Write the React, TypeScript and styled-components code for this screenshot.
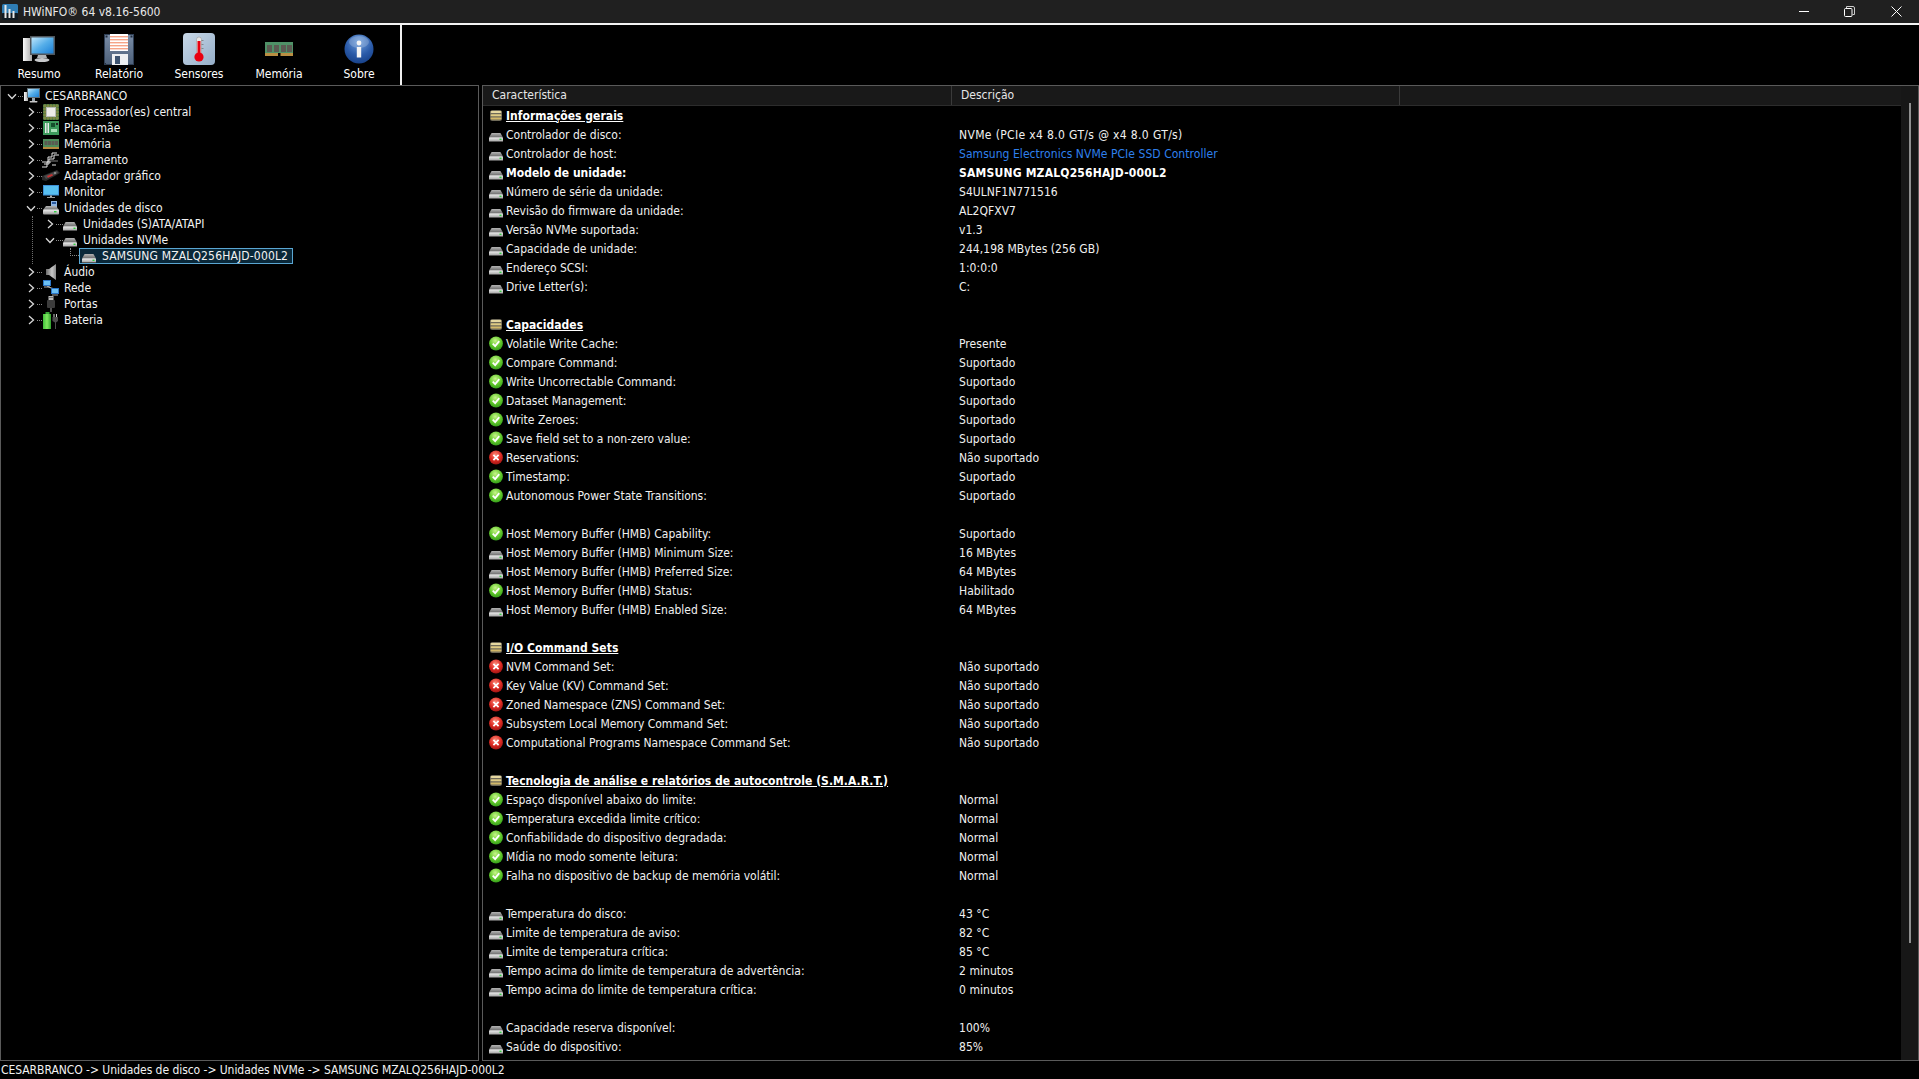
import React from "react";
import styled, { createGlobalStyle } from "styled-components";

const Global = createGlobalStyle`
  html, body { margin: 0; padding: 0; background: #000; overflow: hidden; }
  #root { width: 1919px; height: 1079px; }
  * { box-sizing: border-box; }
`;

const FONT = `"DejaVu Sans Condensed", "DejaVu Sans", "Noto Sans", sans-serif`;

const Win = styled.div`
  width: 1919px; height: 1079px; background: #000; color: #f2f2f2;
  font-family: ${FONT}; font-size: 12px;
  display: grid; grid-template-rows: 23px 2px 60px 976px 18px;
`;
const TitleBar = styled.header`
  background: #202020; display: flex; align-items: center; padding-left: 2px; font-size: 12px; color: #e8e8e8;
`;
const TitleText = styled.span` flex: 1; margin-left: 5px; `;
const WinBtn = styled.button`
  width: 46px; height: 23px; padding: 0; border: 0; background: none; color: #fff;
  display: flex; align-items: center; justify-content: center;
`;
const TitleRule = styled.div` background: #f4f4f4; `;
const Toolbar = styled.nav` display: flex; `;
const Tools = styled.div`
  width: 403px; height: 60px; margin-left: -1px; display: flex; border-right: 2px solid #f0f0f0;
`;
const Tool = styled.div`
  width: 80px; height: 60px; display: flex; flex-direction: column; align-items: center;
  color: #fff; font-size: 12px; line-height: 14px;
`;
const ToolIconBox = styled.div`
  height: 40px; margin-bottom: 2px; padding-top: 8px; display: flex; align-items: center;
`;
const Main = styled.main` display: flex; gap: 3px; min-height: 0; `;
const TreePanel = styled.section`
  width: 479px; border: 1px solid #5a5a5a; padding-top: 2px; overflow: hidden;
`;
const TreeRow = styled.div<{ $pad: number }>`
  height: 16px; display: flex; align-items: center; padding-left: ${p => p.$pad}px; white-space: nowrap; color: #f2f2f2;
`;
const Chevron = styled.span`
  width: 12px; height: 16px; display: flex; align-items: center; justify-content: center; flex: none;
`;
const Dots = styled.span<{ $w: number }>`
  width: ${p => p.$w}px; border-top: 1px dotted #8a8a8a; flex: none;
`;
const Elbow = styled.span`
  width: 9px; height: 8px; flex: none; align-self: flex-start;
  border-left: 1px dotted #8a8a8a; border-bottom: 1px dotted #8a8a8a;
`;
const TreeIconBox = styled.span<{ $w: number; $start?: boolean }>`
  width: ${p => p.$w}px; height: 16px; display: flex; align-items: center;
  justify-content: ${p => (p.$start ? "flex-start" : "center")}; flex: none;
`;
const TreeLabel = styled.span` margin-left: 4px; `;
const Selected = styled.span`
  display: flex; align-items: center; height: 16px; padding: 0 4px 0 2px; letter-spacing: 0.16px;
  border: 1px solid #5aa6d2; background: #0a2839;
`;
const Branch = styled.div`
  margin-left: 31px; border-left: 1px dotted #6e6e6e;
`;
const DetailPanel = styled.section`
  flex: 1; min-width: 0; border: 1px solid #5a5a5a; display: flex; overflow: hidden;
`;
const DetailBody = styled.div` flex: 1; min-width: 0; `;
const Head = styled.div`
  height: 20px; background: #191919; display: grid; grid-template-columns: 469px 448px 1fr; align-items: stretch;
  border-bottom: 1px solid #2c2c2c; color: #e6e6e6;
`;
const HeadCell = styled.div`
  padding: 0 0 2px 9px; display: flex; align-items: center; border-right: 1px solid #3a3a3a;
  &:last-child { border-right: 0; }
`;
const Row = styled.div`
  height: 19px; display: grid; grid-template-columns: 469px 1fr; align-items: center;
`;
const Feature = styled.div<{ $strong?: boolean; $head?: boolean }>`
  display: flex; align-items: center; padding-left: 6px; gap: 3px; white-space: nowrap;
  font-weight: ${p => (p.$strong || p.$head ? 700 : 400)};
  letter-spacing: ${p => (p.$head ? "0.03px" : "0")};
  color: ${p => (p.$strong || p.$head ? "#fff" : "#f0f0f0")};
`;
const FeatureText = styled.span<{ $head?: boolean }>`
  text-decoration: ${p => (p.$head ? "underline" : "none")};
`;
const Value = styled.div<{ $strong?: boolean; $link?: boolean; $wide?: boolean }>`
  padding-left: 7px; white-space: nowrap;
  font-weight: ${p => (p.$strong ? 700 : 400)};
  letter-spacing: ${p => (p.$wide ? "0.36px" : p.$strong ? "0.2px" : "0.05px")};
  color: ${p => (p.$link ? "#2f80ed" : p.$strong ? "#fff" : "#f0f0f0")};
`;
const RowIconBox = styled.span`
  width: 14px; height: 19px; flex: none; display: flex; align-items: center; justify-content: center;
`;
const Scrollbar = styled.div`
  width: 17px; background: #171717; flex: none; padding: 17px 0 117px 8px;
`;
const Thumb = styled.div` width: 2px; height: 100%; background: #8f8f8f; `;
const Status = styled.footer`
  padding-left: 1px; display: flex; align-items: center; color: #f2f2f2; white-space: nowrap; font-size: 12px;
  letter-spacing: -0.05px;
`;
const Sprite = styled.svg` width: 0; height: 0; position: absolute; `;

/* ---------- drawings ---------- */
const Gradients = () => (
  <Sprite aria-hidden="true">
    <defs>
      <linearGradient id="hddTop" x1="0" y1="0" x2="0" y2="1"><stop offset="0" stopColor="#b4b4b4" /><stop offset="1" stopColor="#6a6a6a" /></linearGradient>
      <linearGradient id="hddBot" x1="0" y1="0" x2="0" y2="1"><stop offset="0" stopColor="#f2f2f2" /><stop offset="1" stopColor="#9a9a9a" /></linearGradient>
      <radialGradient id="okG" cx=".45" cy=".3" r=".75"><stop offset="0" stopColor="#c8f58a" /><stop offset=".55" stopColor="#63c92c" /><stop offset="1" stopColor="#2f9a18" /></radialGradient>
      <radialGradient id="noG" cx=".45" cy=".3" r=".75"><stop offset="0" stopColor="#fb8a78" /><stop offset=".55" stopColor="#dc2a22" /><stop offset="1" stopColor="#991212" /></radialGradient>
      <linearGradient id="screen" x1="0" y1="0" x2="1" y2="1"><stop offset="0" stopColor="#bfe6fb" /><stop offset=".5" stopColor="#55aee9" /><stop offset="1" stopColor="#1b7fd6" /></linearGradient>
      <linearGradient id="tower" x1="0" y1="0" x2="1" y2="0"><stop offset="0" stopColor="#fafafa" /><stop offset="1" stopColor="#a8a8a8" /></linearGradient>
      <linearGradient id="floppy" x1="0" y1="0" x2="0" y2="1"><stop offset="0" stopColor="#7b8ea8" /><stop offset="1" stopColor="#4d6079" /></linearGradient>
      <linearGradient id="tile" x1="0" y1="0" x2="1" y2="1"><stop offset="0" stopColor="#c8d8e8" /><stop offset="1" stopColor="#95aec8" /></linearGradient>
      <radialGradient id="orb" cx=".5" cy=".25" r=".85"><stop offset="0" stopColor="#6f9fdc" /><stop offset=".55" stopColor="#2a5aa8" /><stop offset="1" stopColor="#123a80" /></radialGradient>
      <linearGradient id="batt" x1="0" y1="0" x2="1" y2="0"><stop offset="0" stopColor="#3fbf3a" /><stop offset=".5" stopColor="#7fe85f" /><stop offset="1" stopColor="#2fa02c" /></linearGradient>
      <linearGradient id="spk" x1="0" y1="0" x2="1" y2="0"><stop offset="0" stopColor="#6a6a6a" /><stop offset=".6" stopColor="#c8c8c8" /><stop offset="1" stopColor="#8a8a8a" /></linearGradient>
    </defs>
  </Sprite>
);

const Hdd = () => (
  <svg width="14" height="9" viewBox="0 0 14 9" style={{ marginTop: 5 }}>
    <path d="M2.6 0H11.4L14 4.5H0Z" fill="url(#hddTop)" />
    <rect x="0" y="4.2" width="14" height="4.8" rx="1" fill="url(#hddBot)" />
    <rect x="0" y="8" width="14" height="1" fill="#555" />
    <rect x="10.5" y="5.6" width="2" height="1.4" fill="#30d040" />
  </svg>
);
const Ok = () => (
  <svg width="15" height="15" viewBox="0 0 15 15">
    <circle cx="7.5" cy="7.5" r="7.4" fill="url(#okG)" />
    <path d="M4 7.6 6.6 10.3 11 5" fill="none" stroke="#fff" strokeWidth="1.9" />
  </svg>
);
const No = () => (
  <svg width="15" height="15" viewBox="0 0 15 15">
    <circle cx="7.5" cy="7.5" r="7.4" fill="url(#noG)" />
    <path d="M4.7 4.7 10.3 10.3M10.3 4.7 4.7 10.3" fill="none" stroke="#fff" strokeWidth="1.9" />
  </svg>
);
const Stack = () => (
  <svg width="12" height="11" viewBox="0 0 12 11" style={{ marginTop: -1 }}>
    <rect x="0" y="0" width="12" height="11" rx="2.5" fill="#6f6a58" />
    <rect x="0.7" y="1" width="10.6" height="2" rx=".8" fill="#e6d8a0" />
    <rect x="0.7" y="4.3" width="10.6" height="2" rx=".8" fill="#e0cc84" />
    <rect x="0.7" y="7.6" width="10.6" height="2" rx=".8" fill="#d2b868" />
  </svg>
);

const ChevronRight = () => (
  <svg width="7" height="10" viewBox="0 0 7 10"><path d="M1 1 5.5 5 1 9" fill="none" stroke="#d8d8d8" strokeWidth="1.3" /></svg>
);
const ChevronDown = () => (
  <svg width="10" height="7" viewBox="0 0 10 7"><path d="M1 1.2 5 5.5 9 1.2" fill="none" stroke="#d8d8d8" strokeWidth="1.3" /></svg>
);

const PcSmall = () => (
  <svg width="16" height="16" viewBox="0 0 16 16">
    <rect x="0" y="4" width="4" height="9" fill="url(#tower)" />
    <rect x="3" y="0" width="13" height="10" fill="#5d6a72" />
    <rect x="4" y="1" width="11" height="8" fill="url(#screen)" />
    <rect x="8" y="10" width="3" height="3" fill="#9aa5ac" />
    <rect x="5.5" y="13" width="8" height="1.5" rx=".7" fill="#c8c8c8" />
  </svg>
);
const Cpu = () => (
  <svg width="16" height="16" viewBox="0 0 16 16">
    <rect x="0" y="0" width="16" height="16" rx="1" fill="#3e6f3e" />
    <path d="M2 0V16M5 0V16M8 0V16M11 0V16M14 0V16M0 2H16M0 5H16M0 8H16M0 11H16M0 14H16" stroke="#b8a24c" strokeWidth=".6" />
    <rect x="3" y="3" width="10" height="10" fill="#b8bcb8" />
    <rect x="4" y="4" width="8" height="8" fill="#ecece8" />
  </svg>
);
const Board = () => (
  <svg width="16" height="14" viewBox="0 0 16 14">
    <rect width="16" height="14" fill="#3c9a5c" />
    <rect x="2" y="2" width="1.5" height="10" fill="#e8e8e8" />
    <rect x="4.5" y="2" width="1.5" height="10" fill="#e8e8e8" />
    <rect x="8" y="2" width="4" height="4" fill="#14502c" />
    <rect x="8" y="8" width="6" height="3" fill="#a8e0b8" />
    <rect x="13" y="2" width="2" height="2" fill="#222" />
  </svg>
);
const RamSmall = () => (
  <svg width="16" height="11" viewBox="0 0 16 11">
    <rect width="16" height="9" fill="#4d8a5a" />
    <rect x="1.5" y="2" width="3" height="4" fill="#5a5a52" />
    <rect x="5" y="2" width="3" height="4" fill="#5a5a52" />
    <rect x="8.5" y="2" width="3" height="4" fill="#5a5a52" />
    <rect x="12" y="2" width="3" height="4" fill="#5a5a52" />
    <rect x="0" y="8" width="16" height="2" fill="#b5893f" />
  </svg>
);
const Bus = () => (
  <svg width="18" height="16" viewBox="0 0 18 16">
    <path d="M0 10H6V5H10V1H15M2 12H7V7H12V3H17M0 15H5V10H9M10 13H14" fill="none" stroke="#e4e4e4" strokeWidth="1" />
    <path d="M8 9H16" stroke="#808080" strokeWidth="1" />
  </svg>
);
const Gpu = () => (
  <svg width="18" height="12" viewBox="0 0 18 12">
    <path d="M0 6 15 0 18 3 4 11 0 10Z" fill="#2a2a2a" />
    <path d="M2 6 15 1 16 3 4 9Z" fill="#4a4a4a" />
    <path d="M5 6 10 4 11 5.5 6 7.8Z" fill="#c83030" />
    <circle cx="13" cy="3" r="1.2" fill="#888" />
  </svg>
);
const MonitorSmall = () => (
  <svg width="16" height="14" viewBox="0 0 16 14">
    <rect width="16" height="10.5" fill="#3e8fd6" />
    <rect x="1" y="1" width="14" height="8.5" fill="#58bff0" />
    <rect x="7" y="10.5" width="2" height="1.5" fill="#aaa" />
    <rect x="4" y="12" width="8" height="1" fill="#999" />
  </svg>
);
const Drives = () => (
  <svg width="16" height="14" viewBox="0 0 16 14">
    <rect x="8" y="0" width="6" height="7" fill="#8fb4e0" />
    <rect x="9" y="1" width="4" height="2" fill="#2a5aa0" />
    <path d="M3 5H13L16 9H0Z" fill="url(#hddTop)" />
    <rect x="0" y="8.5" width="16" height="5" rx="1" fill="url(#hddBot)" />
    <rect x="11" y="10" width="2.5" height="1.4" fill="#30d040" />
  </svg>
);
const Speaker = () => (
  <svg width="10" height="16" viewBox="0 0 10 16">
    <path d="M0 5H3L10 0V16L3 11H0Z" fill="url(#spk)" />
  </svg>
);
const Net = () => (
  <svg width="16" height="16" viewBox="0 0 16 16">
    <path d="M4 6 8 8 12 9" stroke="#d0d0d0" strokeWidth="1" fill="none" />
    <rect x="0" y="0" width="8" height="6" fill="#2c76c8" />
    <rect x="1" y="1" width="6" height="4" fill="#6cc0f4" />
    <rect x="8" y="8" width="8" height="6" fill="#2c76c8" />
    <rect x="9" y="9" width="6" height="4" fill="#6cc0f4" />
    <rect x="1" y="6.5" width="6" height="1" fill="#aaa" />
    <rect x="9" y="14.5" width="6" height="1" fill="#aaa" />
  </svg>
);
const Usb = () => (
  <svg width="8" height="16" viewBox="0 0 8 16">
    <rect x="1.5" y="0" width="5" height="4" fill="#b8b8b8" />
    <rect x="0" y="4" width="8" height="8" rx="1" fill="#3c3c3c" />
    <rect x="2.5" y="1" width="1" height="1" fill="#333" />
    <rect x="4.5" y="1" width="1" height="1" fill="#333" />
    <rect x="3" y="12" width="2" height="4" fill="#505050" />
  </svg>
);
const Battery = () => (
  <svg width="16" height="17" viewBox="0 0 16 17">
    <rect x="2.5" y="0" width="4" height="2" fill="#3aa838" />
    <rect x="0" y="2" width="8" height="15" fill="url(#batt)" />
    <rect x="10.5" y="2" width="1" height="3" fill="#cfcfcf" />
    <rect x="13" y="2" width="1" height="3" fill="#cfcfcf" />
    <path d="M9.5 5H15V9L13 10.5V17H12V10.5L9.5 9Z" fill="#4c4c4c" />
  </svg>
);

const BigMonitor = () => (
  <svg width="32" height="26" viewBox="0 0 32 26">
    <rect x="0" y="2" width="9" height="23" fill="url(#tower)" />
    <rect x="7" y="0" width="25" height="19" fill="#50565c" />
    <path d="M8.5 1.5H30.5V17.5H8.5Z" fill="url(#screen)" />
    <path d="M15 19H23L24 22H14Z" fill="#b0b4b8" />
    <ellipse cx="19" cy="24" rx="7.5" ry="2" fill="#c8cacc" />
  </svg>
);
const BigFloppy = () => (
  <svg width="30" height="31" viewBox="0 0 30 31">
    <path d="M0 0H30V31H3L0 28Z" fill="url(#floppy)" />
    <rect x="0.5" y="0.5" width="29" height="30" fill="none" stroke="#2f3f55" />
    <rect x="6" y="0" width="18" height="17" fill="#fff" />
    {[2, 5, 8, 11, 14].map(y => <rect key={y} x="6" y={y} width="18" height="1.4" fill="#f6a488" />)}
    <rect x="8" y="20" width="16" height="11" fill="#eef0f2" />
    <rect x="11" y="22" width="5" height="8" fill="#3e5470" />
    <rect x="1.5" y="1.5" width="2" height="2" fill="#1f2b3c" />
    <rect x="26.5" y="1.5" width="2" height="2" fill="#1f2b3c" />
  </svg>
);
const BigThermo = () => (
  <svg width="32" height="32" viewBox="0 0 32 32">
    <rect width="32" height="32" rx="4" fill="url(#tile)" />
    <rect x="13.5" y="4" width="5" height="20" rx="2.5" fill="#e8e8e8" stroke="#9a9a9a" strokeWidth=".6" />
    <rect x="14.5" y="8" width="3" height="16" fill="#e80010" />
    <circle cx="16" cy="24" r="4.6" fill="#e80010" />
    <rect x="18.5" y="7" width="2" height=".8" fill="#777" />
    <rect x="18.5" y="11" width="2" height=".8" fill="#777" />
    <rect x="18.5" y="15" width="2" height=".8" fill="#777" />
  </svg>
);
const BigRam = () => (
  <svg width="28" height="15" viewBox="0 0 28 15">
    <rect width="28" height="13" fill="#4f9167" />
    {[2, 9, 16, 22].map(x => <rect key={x} x={x} y="3" width="5" height="7" fill="#5c5a52" />)}
    <rect x="0" y="11" width="28" height="3" fill="#b98e42" />
    <rect x="13" y="11" width="2.5" height="4" fill="#000" />
  </svg>
);
const BigInfo = () => (
  <svg width="30" height="30" viewBox="0 0 30 30">
    <circle cx="15" cy="15" r="14.5" fill="url(#orb)" />
    <ellipse cx="15" cy="8" rx="10" ry="6" fill="#fff" opacity=".2" />
    <circle cx="15" cy="9" r="2.4" fill="#f4f4f4" />
    <rect x="12.8" y="13" width="4.4" height="10.5" fill="#f4f4f4" />
  </svg>
);
const AppLogo = () => (
  <svg width="16" height="16" viewBox="0 0 16 16">
    <rect width="16" height="10" rx="1.5" fill="#2f7db4" />
    <rect y="9" width="16" height="7" rx="1" fill="#101a22" />
    <rect x="2.5" y="1" width="2" height="13" fill="#e8e8e8" />
    <rect x="6.5" y="5" width="2" height="9" fill="#e8e8e8" />
    <rect x="10.5" y="7" width="2" height="7" fill="#e8e8e8" />
  </svg>
);

/* ---------- data ---------- */
const tools = [
  { label: "Resumo", icon: <BigMonitor /> },
  { label: "Relatório", icon: <BigFloppy /> },
  { label: "Sensores", icon: <BigThermo /> },
  { label: "Memória", icon: <BigRam /> },
  { label: "Sobre", icon: <BigInfo /> },
];
const level1a = [
  { label: "Processador(es) central", icon: <Cpu /> },
  { label: "Placa-mãe", icon: <Board /> },
  { label: "Memória", icon: <RamSmall /> },
  { label: "Barramento", icon: <Bus /> },
  { label: "Adaptador gráfico", icon: <Gpu /> },
  { label: "Monitor", icon: <MonitorSmall /> },
];
const level1b = [
  { label: "Áudio", icon: <Speaker /> },
  { label: "Rede", icon: <Net /> },
  { label: "Portas", icon: <Usb /> },
  { label: "Bateria", icon: <Battery /> },
];

type Kind = "hdd" | "ok" | "no" | "stack";
type R = { k?: Kind; a?: string; b?: string; head?: boolean; strong?: boolean; link?: boolean; wide?: boolean };
const hdd = (a: string, b: string, extra: Partial<R> = {}): R => ({ k: "hdd", a, b, ...extra });
const ok = (a: string, b: string): R => ({ k: "ok", a, b });
const no = (a: string, b = "Não suportado"): R => ({ k: "no", a, b });
const sec = (a: string): R => ({ k: "stack", a, head: true });
const rows: R[] = [
  sec("Informações gerais"),
  hdd("Controlador de disco:", "NVMe (PCIe x4 8.0 GT/s @ x4 8.0 GT/s)", { wide: true }),
  hdd("Controlador de host:", "Samsung Electronics NVMe PCIe SSD Controller", { link: true }),
  hdd("Modelo de unidade:", "SAMSUNG MZALQ256HAJD-000L2", { strong: true }),
  hdd("Número de série da unidade:", "S4ULNF1N771516"),
  hdd("Revisão do firmware da unidade:", "AL2QFXV7"),
  hdd("Versão NVMe suportada:", "v1.3"),
  hdd("Capacidade de unidade:", "244,198 MBytes (256 GB)"),
  hdd("Endereço SCSI:", "1:0:0:0"),
  hdd("Drive Letter(s):", "C:"),
  {},
  sec("Capacidades"),
  ok("Volatile Write Cache:", "Presente"),
  ok("Compare Command:", "Suportado"),
  ok("Write Uncorrectable Command:", "Suportado"),
  ok("Dataset Management:", "Suportado"),
  ok("Write Zeroes:", "Suportado"),
  ok("Save field set to a non-zero value:", "Suportado"),
  no("Reservations:"),
  ok("Timestamp:", "Suportado"),
  ok("Autonomous Power State Transitions:", "Suportado"),
  {},
  ok("Host Memory Buffer (HMB) Capability:", "Suportado"),
  hdd("Host Memory Buffer (HMB) Minimum Size:", "16 MBytes"),
  hdd("Host Memory Buffer (HMB) Preferred Size:", "64 MBytes"),
  ok("Host Memory Buffer (HMB) Status:", "Habilitado"),
  hdd("Host Memory Buffer (HMB) Enabled Size:", "64 MBytes"),
  {},
  sec("I/O Command Sets"),
  no("NVM Command Set:"),
  no("Key Value (KV) Command Set:"),
  no("Zoned Namespace (ZNS) Command Set:"),
  no("Subsystem Local Memory Command Set:"),
  no("Computational Programs Namespace Command Set:"),
  {},
  sec("Tecnologia de análise e relatórios de autocontrole (S.M.A.R.T.)"),
  ok("Espaço disponível abaixo do limite:", "Normal"),
  ok("Temperatura excedida limite crítico:", "Normal"),
  ok("Confiabilidade do dispositivo degradada:", "Normal"),
  ok("Mídia no modo somente leitura:", "Normal"),
  ok("Falha no dispositivo de backup de memória volátil:", "Normal"),
  {},
  hdd("Temperatura do disco:", "43 °C"),
  hdd("Limite de temperatura de aviso:", "82 °C"),
  hdd("Limite de temperatura crítica:", "85 °C"),
  hdd("Tempo acima do limite de temperatura de advertência:", "2 minutos"),
  hdd("Tempo acima do limite de temperatura crítica:", "0 minutos"),
  {},
  hdd("Capacidade reserva disponível:", "100%"),
  hdd("Saúde do dispositivo:", "85%"),
];
const kindIcon = (k?: Kind) =>
  k === "hdd" ? <Hdd /> : k === "ok" ? <Ok /> : k === "no" ? <No /> : k === "stack" ? <Stack /> : null;

const Level1 = ({ label, icon, open }: { label: string; icon: React.ReactNode; open?: boolean }) => (
  <TreeRow $pad={24}>
    <Chevron>{open ? <ChevronDown /> : <ChevronRight />}</Chevron>
    <Dots $w={5} />
    <TreeIconBox $w={18}>{icon}</TreeIconBox>
    <TreeLabel>{label}</TreeLabel>
  </TreeRow>
);

export default function App() {
  return (
    <Win>
      <Global />
      <Gradients />
      <TitleBar>
        <AppLogo />
        <TitleText>HWiNFO® 64 v8.16-5600</TitleText>
        <WinBtn aria-label="Minimizar"><svg width="11" height="11" viewBox="0 0 11 11"><path d="M0 5.5H10" stroke="#fff" /></svg></WinBtn>
        <WinBtn aria-label="Restaurar"><svg width="13" height="11" viewBox="0 0 13 11"><rect x=".5" y="2.5" width="7.5" height="8" rx="1" fill="none" stroke="#fff" /><path d="M2.5 2V.5H9A1.5 1.5 0 0 1 10.5 2V8.5H8.5" fill="none" stroke="#ccc" /></svg></WinBtn>
        <WinBtn aria-label="Fechar"><svg width="11" height="11" viewBox="0 0 11 11"><path d="M.5.5 10.5 10.5M10.5.5 .5 10.5" stroke="#fff" /></svg></WinBtn>
      </TitleBar>
      <TitleRule />
      <Toolbar>
        <Tools>
          {tools.map(t => (
            <Tool key={t.label}>
              <ToolIconBox>{t.icon}</ToolIconBox>
              {t.label}
            </Tool>
          ))}
        </Tools>
      </Toolbar>
      <Main>
        <TreePanel>
          <TreeRow $pad={5}>
            <Chevron><ChevronDown /></Chevron>
            <Dots $w={5} />
            <TreeIconBox $w={18}><PcSmall /></TreeIconBox>
            <TreeLabel>CESARBRANCO</TreeLabel>
          </TreeRow>
          {level1a.map(i => <Level1 key={i.label} {...i} />)}
          <Level1 label="Unidades de disco" icon={<Drives />} open />
          <Branch>
            <TreeRow $pad={11}>
              <Chevron><ChevronRight /></Chevron>
              <Dots $w={7} />
              <TreeIconBox $w={16} $start><Hdd /></TreeIconBox>
              <TreeLabel>Unidades (S)ATA/ATAPI</TreeLabel>
            </TreeRow>
            <TreeRow $pad={11}>
              <Chevron><ChevronDown /></Chevron>
              <Dots $w={7} />
              <TreeIconBox $w={16} $start><Hdd /></TreeIconBox>
              <TreeLabel>Unidades NVMe</TreeLabel>
            </TreeRow>
            <TreeRow $pad={37}>
              <Elbow />
              <Selected>
                <TreeIconBox $w={16} $start><Hdd /></TreeIconBox>
                <TreeLabel>SAMSUNG MZALQ256HAJD-000L2</TreeLabel>
              </Selected>
            </TreeRow>
          </Branch>
          {level1b.map(i => <Level1 key={i.label} {...i} />)}
        </TreePanel>
        <DetailPanel>
          <DetailBody>
            <Head>
              <HeadCell>Característica</HeadCell>
              <HeadCell>Descrição</HeadCell>
              <HeadCell />
            </Head>
            {rows.map((r, i) => (
              <Row key={i}>
                <Feature $strong={r.strong} $head={r.head}>
                  {r.k && <RowIconBox>{kindIcon(r.k)}</RowIconBox>}
                  <FeatureText $head={r.head}>{r.a}</FeatureText>
                </Feature>
                <Value $strong={r.strong} $link={r.link} $wide={r.wide}>{r.b}</Value>
              </Row>
            ))}
          </DetailBody>
          <Scrollbar><Thumb /></Scrollbar>
        </DetailPanel>
      </Main>
      <Status>CESARBRANCO -&gt; Unidades de disco -&gt; Unidades NVMe -&gt; SAMSUNG MZALQ256HAJD-000L2</Status>
    </Win>
  );
}
